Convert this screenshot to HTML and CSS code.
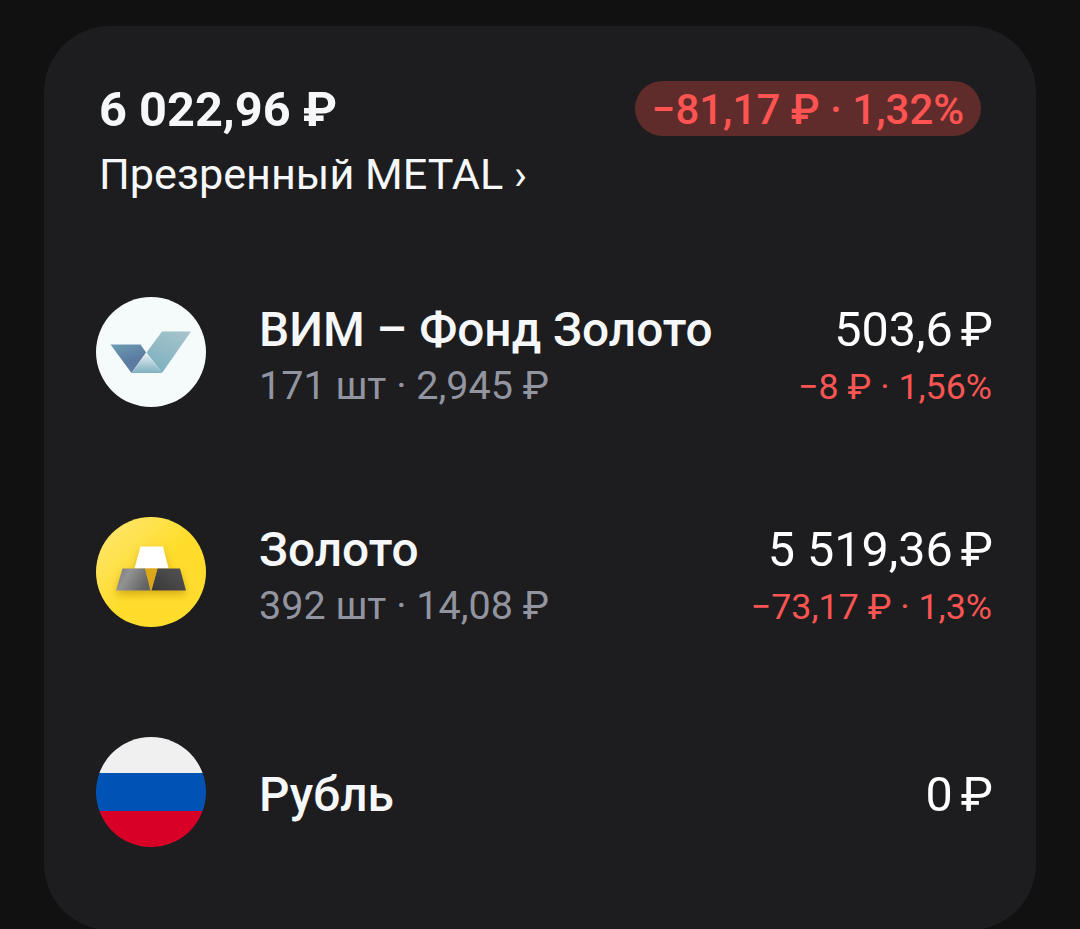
FILE: index.html
```html
<!DOCTYPE html>
<html lang="ru">

<head>
  <meta charset="UTF-8" />
  <meta name="viewport" content="width=device-width, initial-scale=1.0" />
  <title>Портфель</title>
  <link rel="stylesheet" href="styles.css">
</head>

<body>
  <div class="card">
    <div class="header">
      <div>
        <div class="total">6 022,96 ₽</div>
        <div class="account">Презренный METAL ›</div>
      </div>
      <div class="badge">−81,17 ₽ · 1,32%</div>
    </div>
    <ul class="list">
      <li>
        <svg class="logo" viewBox="0 0 110 110">
          <defs>
            <linearGradient id="vim-left" x1="0.2" y1="0" x2="0.6" y2="1">
              <stop offset="0" stop-color="#6b9bb1" />
              <stop offset="0.6" stop-color="#5b7ba1" />
              <stop offset="1" stop-color="#607ba3" />
            </linearGradient>
            <linearGradient id="vim-right" x1="0.8" y1="0" x2="0.3" y2="1">
              <stop offset="0" stop-color="#a5c3cb" />
              <stop offset="1" stop-color="#7db1c0" />
            </linearGradient>
            <linearGradient id="vim-middle" x1="0" y1="0" x2="0" y2="1">
              <stop offset="0" stop-color="#e8f1f3" />
              <stop offset="1" stop-color="#80b0c0" />
            </linearGradient>
          </defs>
          <circle cx="55" cy="55" r="55" fill="#f5fafb" />
          <path d="M14.5 47.5H44.5L50 55.5L35.5 76Z" fill="url(#vim-left)" />
          <path d="M66 34.5H95L66 76L50.5 55.5Z" fill="url(#vim-right)" />
          <path d="M50.3 56L66 76H35.5Z" fill="url(#vim-middle)" />
        </svg>
        <div class="info">
          <div class="name">ВИМ – Фонд Золото</div>
          <div class="count">171 шт · 2,945 ₽</div>
        </div>
        <div class="price">
          <div class="sum">503,6<span class="currency">₽</span></div>
          <div class="change">−8 ₽ · 1,56%</div>
        </div>
      </li>
      <li>
        <svg class="logo" viewBox="0 0 110 110">
          <defs>
            <linearGradient id="gold-bg" x1="0" y1="0" x2="0.5" y2="0.5">
              <stop offset="0" stop-color="#ffe879" />
              <stop offset="1" stop-color="#ffdd2d" />
            </linearGradient>
            <linearGradient id="bar-left" x1="0" y1="0" x2="1" y2="0.4">
              <stop offset="0" stop-color="#777" />
              <stop offset="0.4" stop-color="#929292" />
              <stop offset="1" stop-color="#646464" />
            </linearGradient>
            <linearGradient id="bar-right" x1="0" y1="1" x2="1" y2="0">
              <stop offset="0" stop-color="#383838" />
              <stop offset="1" stop-color="#555" />
            </linearGradient>
            <filter id="bar-shadow" x="-30%" y="-30%" width="160%" height="170%">
              <feDropShadow dx="0" dy="4" stdDeviation="4" flood-color="#a87800" flood-opacity="0.5" />
            </filter>
          </defs>
          <circle cx="55" cy="55" r="55" fill="url(#gold-bg)" />
          <g filter="url(#bar-shadow)">
            <path d="M44.5 29.5H67L72.5 51.5H38.5Z" fill="#fff" />
            <path d="M26.5 51.5H49L54.5 73.5H20Z" fill="url(#bar-left)" />
            <path d="M61.5 51.5H84L90 73.5H55.5Z" fill="url(#bar-right)" />
            <path d="M49 51.5H61.5L55 73.5Z" fill="#dda71d" />
          </g>
        </svg>
        <div class="info">
          <div class="name">Золото</div>
          <div class="count">392 шт · 14,08 ₽</div>
        </div>
        <div class="price">
          <div class="sum">5 519,36<span class="currency">₽</span></div>
          <div class="change">−73,17 ₽ · 1,3%</div>
        </div>
      </li>
      <li class="single">
        <div class="logo flag"></div>
        <div class="info">
          <div class="name">Рубль</div>
        </div>
        <div class="price">
          <div class="sum">0<span class="currency">₽</span></div>
        </div>
      </li>
    </ul>
  </div>
</body>

</html>
```

FILE: styles.css
```css
* {
  padding: 0;
  margin: 0;
  box-sizing: border-box;
  list-style: none;
}

body {
  height: 929px;
  padding: 26px 44px 0;
  overflow: hidden;
  color: #fff;
  background-color: #111;
  font-family: Roboto, sans-serif;
  white-space: nowrap;
}

.card {
  height: 904px;
  padding: 55px 44px 0 52px;
  border-radius: 66px;
  background-color: #1d1d1f;
}

.header {
  display: flex;
  justify-content: space-between;
  height: 190px;
  padding: 0 11px 0 3px;
  color: #f6f7f9;
}

.total {
  padding-top: 1px;
  font-size: 48.7px;
  font-weight: 700;
  line-height: 56px;
}

.account {
  margin-top: 9px;
  font-size: 43.2px;
  line-height: 56px;
}

.badge {
  width: 346px;
  height: 55px;
  padding-top: 1px;
  border-radius: 28px;
  color: #ff5451;
  background-color: #602b2b;
  font-size: 42px;
  font-weight: 500;
  line-height: 55px;
  text-align: center;
}

.list {
  margin-top: -29px;
}

.list > li {
  display: flex;
  align-items: center;
  height: 220px;
}

.logo {
  width: 110px;
  height: 110px;
  margin-right: 53px;
}

.info {
  flex: 1;
  padding-top: 12px;
}

.name {
  color: #f6f7f9;
  font-size: 47.8px;
  font-weight: 500;
  line-height: 56px;
}

.count {
  color: #9295a0;
  font-size: 39.5px;
  line-height: 56px;
}

.price {
  padding-top: 14px;
  text-align: right;
}

.sum {
  font-size: 48.5px;
  line-height: 56px;
}

.currency {
  margin-right: -1px;
  margin-left: 8px;
}

.change {
  color: #fa5553;
  font-size: 35.8px;
  line-height: 58px;
}

/* row without the second line */
.single .info,
.single .price {
  padding-top: 6px;
}

.flag {
  border-radius: 50%;
  background: linear-gradient(#f0f0f0 36px, #0052b4 36px, #0052b4 74px, #d80027 74px);
}
```
